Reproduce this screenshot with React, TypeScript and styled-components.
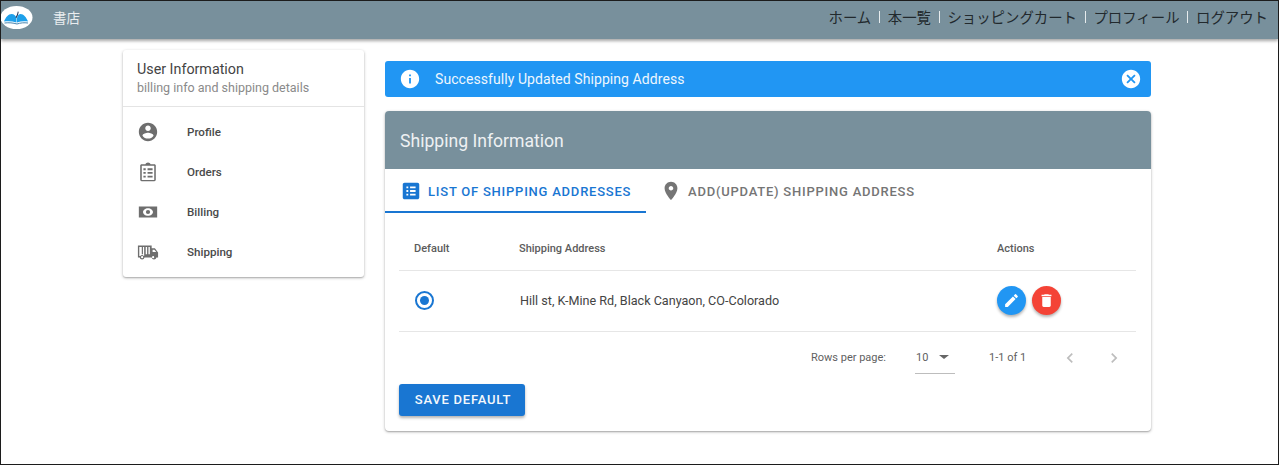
import React from 'react'
import styled, {createGlobalStyle} from 'styled-components'

const GlobalStyle = createGlobalStyle`
  html, body {
    margin: 0;
    padding: 0;
    background: #fff;
  }
  * {
    box-sizing: border-box;
  }
  body {
    font-family: Roboto, "Noto Sans CJK JP", sans-serif;
  }
`

const Frame = styled.div`
  width: 1279px;
  height: 465px;
  border: 1px solid #1c1c1c;
  overflow: hidden;
  display: flex;
  flex-direction: column;
`

const AppBar = styled.header`
  height: 38px;
  flex: none;
  background: #78909c;
  box-shadow: 0 2px 3px rgba(0, 0, 0, 0.35);
  display: flex;
  align-items: flex-start;
  justify-content: space-between;
  padding-right: 10px;
`

const Brand = styled.div`
  display: flex;
  align-items: center;
  gap: 20px;
  padding-top: 4px;
`

const BrandName = styled.span`
  font-family: "Noto Sans CJK JP", sans-serif;
  font-size: 13.5px;
  line-height: 22px;
  color: #e9edef;
`

const Nav = styled.nav`
  display: flex;
  align-items: center;
  height: 30px;
  font-family: "Noto Sans CJK JP", sans-serif;
  font-size: 14.4px;
  color: #22292d;
`

const NavSep = styled.span`
  width: 1px;
  height: 12px;
  margin: 2px 7.75px 0 7.75px;
  background: #e6ebed;
`

const Content = styled.main`
  flex: 1;
  display: flex;
  align-items: flex-start;
  gap: 21px;
  padding: 11px 0 0 122px;
`

const SideCard = styled.aside`
  width: 241px;
  flex: none;
  height: 227px;
  background: #fff;
  border-radius: 3px;
  box-shadow: 0 1px 3px rgba(0, 0, 0, 0.3), 0 1px 1px rgba(0, 0, 0, 0.1);
`

const SideHead = styled.div`
  height: 57px;
  padding: 11px 14px 0;
  border-bottom: 1px solid #e4e4e4;
`

const SideTitle = styled.div`
  font-size: 14.3px;
  line-height: 17px;
  color: #444;
`

const SideSub = styled.div`
  font-size: 12.5px;
  line-height: 20px;
  color: #8a8a8a;
`

const SideList = styled.ul`
  list-style: none;
  margin: 0;
  padding: 5px 0 0;
`

const SideItem = styled.li`
  height: 40px;
  display: flex;
  align-items: center;
  padding-left: 14px;
  font-size: 11.6px;
  font-weight: 500;
  color: #4a4a4a;
`

const SideIcon = styled.svg`
  width: 22px;
  height: 22px;
  margin-right: 28px;
  fill: #6e6e6e;
  flex: none;
`

const Column = styled.div`
  width: 766px;
  padding-top: 11px;
  display: flex;
  flex-direction: column;
  gap: 14px;
`

const Alert = styled.div`
  height: 36px;
  background: #2196f3;
  border-radius: 3px;
  display: flex;
  align-items: center;
  padding: 0 9px 0 14px;
  color: #eef7fe;
  font-size: 14px;
`

const AlertIcon = styled.svg`
  width: 22px;
  height: 22px;
  fill: #fff;
  flex: none;
`

const AlertText = styled.span`
  flex: 1;
  margin-left: 14px;
  letter-spacing: 0.07px;
`

const Card = styled.section`
  height: 320px;
  background: #fff;
  border-radius: 4px;
  overflow: hidden;
  box-shadow: 0 1px 3px rgba(0, 0, 0, 0.3), 0 1px 1px rgba(0, 0, 0, 0.12);
`

const CardHead = styled.div`
  height: 58px;
  background: #78909c;
  display: flex;
  align-items: center;
  padding: 1px 0 0 15px;
  font-size: 17.6px;
  color: #eef1f3;
`

const Tabs = styled.div`
  height: 44px;
  display: flex;
`

const Tab = styled.div<{$active?: boolean}>`
  width: ${(props) => (props.$active ? '261px' : 'auto')};
  display: flex;
  align-items: center;
  gap: 6px;
  padding-left: ${(props) => (props.$active ? '15px' : '14px')};
  padding-top: 2px;
  font-size: 13px;
  font-weight: 500;
  letter-spacing: 0.77px;
  color: ${(props) => (props.$active ? '#1976d2' : '#757575')};
  border-bottom: 2px solid ${(props) => (props.$active ? '#1976d2' : 'transparent')};
`

const TabIcon = styled.svg<{$active?: boolean}>`
  width: 22px;
  height: 22px;
  flex: none;
  fill: ${(props) => (props.$active ? '#1976d2' : '#757575')};
`

const TableWrap = styled.div`
  margin: 14px 15px 0 14px;
`

const Row = styled.div<{$head?: boolean}>`
  height: ${(props) => (props.$head ? '44px' : '61px')};
  display: grid;
  grid-template-columns: 105px 478px 1fr;
  align-items: center;
  padding-left: 15px;
  padding-bottom: ${(props) => (props.$head ? '0' : '2px')};
  border-bottom: 1px solid #e6e6e6;
  font-size: ${(props) => (props.$head ? '11px' : '12.6px')};
  font-weight: ${(props) => (props.$head ? 500 : 400)};
  color: ${(props) => (props.$head ? '#5c5c5c' : '#444')};
`

const RadioOuter = styled.span`
  width: 19px;
  height: 19px;
  margin-left: 1px;
  border-radius: 50%;
  border: 2px solid #1976d2;
  display: flex;
  align-items: center;
  justify-content: center;
`

const RadioDot = styled.span`
  width: 9px;
  height: 9px;
  border-radius: 50%;
  background: #1976d2;
`

const AddressCell = styled.span`
  padding-left: 1px;
`

const Actions = styled.div`
  display: flex;
  gap: 6px;
  padding-top: 1px;
`

const RoundButton = styled.button<{$color: string}>`
  width: 29px;
  height: 29px;
  padding: 0;
  border: none;
  border-radius: 50%;
  background: ${(props) => props.$color};
  box-shadow: 0 2px 3px rgba(0, 0, 0, 0.3);
  display: flex;
  align-items: center;
  justify-content: center;
`

const RoundIcon = styled.svg`
  width: 17px;
  height: 17px;
  fill: #fff;
`

const Pager = styled.div`
  height: 51px;
  display: flex;
  align-items: center;
  padding-left: 412px;
  font-size: 11px;
  color: #5f5f5f;
`

const PagerSelect = styled.div`
  width: 40px;
  height: 30px;
  margin: 0 34px 0 29px;
  display: flex;
  align-items: center;
  justify-content: space-between;
  padding: 0 6px 0 1px;
  border-bottom: 1px solid #bdbdbd;
  position: relative;
  top: 1px;
`

const PagerValue = styled.span`
  position: relative;
  top: -1px;
`

const Caret = styled.span`
  width: 0;
  height: 0;
  border-left: 5px solid transparent;
  border-right: 5px solid transparent;
  border-top: 4px solid #666;
  position: relative;
  top: -1px;
`

const Chevrons = styled.div`
  display: flex;
  gap: 24px;
  margin-left: 34px;
`

const ChevronIcon = styled.svg`
  width: 20px;
  height: 20px;
  fill: #bdbdbd;
`

const SaveButton = styled.button`
  display: block;
  width: 126px;
  height: 32px;
  margin: 1px 0 0 14px;
  padding: 0 0 1px 2px;
  border: none;
  border-radius: 3px;
  background: #1976d2;
  color: #f4f8fc;
  font-family: Roboto, sans-serif;
  font-size: 13px;
  font-weight: 500;
  letter-spacing: 0.77px;
  box-shadow: 0 2px 3px rgba(0, 0, 0, 0.3);
`

const Logo = () => (
  <svg width="32" height="24" viewBox="0 0 32 24">
    <ellipse cx="15.5" cy="12.5" rx="16" ry="11.5" fill="#fff" />
    <path d="M3 16.500c1.500-4 4.500-7.500 7.500-7.500 2.500 0 4.500 1.700 5 4v4.500c-4-1.300-8-1.500-12.500-1z" fill="#1ea0ea" />
    <path d="M27 16.500c-1.500-4-4.500-7.500-7.500-7.500-1.500 0-3 1-3.500 4v4.500c3.500-1.300 7-1.500 11-1z" fill="#1ea0ea" />
    <path d="M3.500 18c4.500-.5 8.500-.2 12.500 1 3.500-1.200 7-1.500 11-1" fill="none" stroke="#4a86b0" strokeWidth="1" />
    <path d="M14.500 12.500l1.500-3 .8-3 .9.200-.7 3.300-1.500 3z" fill="#23365c" />
  </svg>
)

const navLinks = ['ホーム', '本一覧', 'ショッピングカート', 'プロフィール', 'ログアウト']

const sideItems = [
  {
    label: 'Profile',
    icon: (
      <path d="M12 2C6.480 2 2 6.480 2 12s4.480 10 10 10 10-4.480 10-10S17.520 2 12 2zm0 3c1.660 0 3 1.340 3 3s-1.340 3-3 3-3-1.340-3-3 1.340-3 3-3zm0 14.200c-2.500 0-4.710-1.280-6-3.220.03-1.990 4-3.080 6-3.080 1.990 0 5.970 1.090 6 3.080-1.290 1.940-3.500 3.220-6 3.220z" />
    ),
  },
  {
    label: 'Orders',
    icon: (
      <path
        fillRule="evenodd"
        d="M5 3.500h4.200C9.600 2.300 10.700 1.500 12 1.500s2.400.8 2.800 2H19c.8 0 1.500.7 1.500 1.500v15.500c0 .8-.7 1.500-1.500 1.500H5c-.8 0-1.500-.7-1.500-1.500V5c0-.8.7-1.500 1.500-1.500zM5.200 5.200v15.600h13.600V5.200zM7 8h2.500v2H7zm4.500 0H17v2h-5.500zM7 12h2.500v2H7zm4.500 0H17v2h-5.500zM7 16h2.500v2H7zm4.500 0H17v2h-5.500z"
      />
    ),
  },
  {
    label: 'Billing',
    icon: (
      <path
        fillRule="evenodd"
        d="M2 6h20v12H2zM12 7.800c-3 0-5.400 2-5.400 4.200s2.400 4.200 5.400 4.200 5.400-2 5.400-4.200-2.400-4.200-5.400-4.200zM12 9.700a2.300 2.300 0 1 1 0 4.600 2.300 2.300 0 0 1 0-4.600z"
      />
    ),
  },
  {
    label: 'Shipping',
    icon: (
      <path
        fillRule="evenodd"
        d="M1 5h15v3h3.500l3.500 4.500V18h-1.800a2.700 2.700 0 0 1-5.300 0H8.200a2.700 2.700 0 0 1-5.300 0H1zm1.500 1.500V16.400h1.100a2.700 2.700 0 0 1 3.900 0h.3V6.500h-1.300v8H5.200v-8zm7 0v8H11v-8zm3 0v8H14v-8zM17 9.500V12h4l-2-2.500zM5.600 16.400a1.200 1.200 0 1 0 0 2.400 1.200 1.200 0 0 0 0-2.400zm12 0a1.200 1.200 0 1 0 0 2.400 1.200 1.200 0 0 0 0-2.400z"
      />
    ),
  },
]

export default function App() {
  return (
    <>
      <GlobalStyle />
      <Frame>
        <AppBar>
          <Brand>
            <Logo />
            <BrandName>書店</BrandName>
          </Brand>
          <Nav>
            {navLinks.map((link, i) => (
              <React.Fragment key={link}>
                {i > 0 && <NavSep />}
                <span>{link}</span>
              </React.Fragment>
            ))}
          </Nav>
        </AppBar>
        <Content>
          <SideCard>
            <SideHead>
              <SideTitle>User Information</SideTitle>
              <SideSub>billing info and shipping details</SideSub>
            </SideHead>
            <SideList>
              {sideItems.map((item) => (
                <SideItem key={item.label}>
                  <SideIcon viewBox="0 0 24 24">{item.icon}</SideIcon>
                  {item.label}
                </SideItem>
              ))}
            </SideList>
          </SideCard>
          <Column>
            <Alert>
              <AlertIcon viewBox="0 0 24 24">
                <path d="M12 2C6.480 2 2 6.480 2 12s4.480 10 10 10 10-4.480 10-10S17.520 2 12 2zm1 15h-2v-6h2v6zm0-8h-2V7h2v2z" />
              </AlertIcon>
              <AlertText>Successfully Updated Shipping Address</AlertText>
              <AlertIcon viewBox="0 0 24 24">
                <path d="M12 2C6.470 2 2 6.470 2 12s4.470 10 10 10 10-4.470 10-10S17.530 2 12 2zm5 13.590L15.590 17 12 13.410 8.410 17 7 15.590 10.590 12 7 8.410 8.410 7 12 10.590 15.590 7 17 8.410 13.410 12 17 15.590z" />
              </AlertIcon>
            </Alert>
            <Card>
              <CardHead>Shipping Information</CardHead>
              <Tabs>
                <Tab $active>
                  <TabIcon $active viewBox="0 0 24 24">
                    <path d="M19 3H5c-1.100 0-2 .9-2 2v14c0 1.100.9 2 2 2h14c1.100 0 2-.9 2-2V5c0-1.100-.9-2-2-2zM9 17H7v-2h2v2zm0-4H7v-2h2v2zm0-4H7V7h2v2zm8 8h-6v-2h6v2zm0-4h-6v-2h6v2zm0-4h-6V7h6v2z" />
                  </TabIcon>
                  LIST OF SHIPPING ADDRESSES
                </Tab>
                <Tab>
                  <TabIcon viewBox="0 0 24 24">
                    <path d="M12 2C8.130 2 5 5.130 5 9c0 5.250 7 13 7 13s7-7.750 7-13c0-3.870-3.130-7-7-7zm0 9.500c-1.380 0-2.500-1.120-2.500-2.500s1.120-2.500 2.500-2.500 2.500 1.120 2.500 2.500-1.120 2.500-2.500 2.500z" />
                  </TabIcon>
                  ADD(UPDATE) SHIPPING ADDRESS
                </Tab>
              </Tabs>
              <TableWrap>
                <Row $head>
                  <span>Default</span>
                  <span>Shipping Address</span>
                  <span>Actions</span>
                </Row>
                <Row>
                  <RadioOuter>
                    <RadioDot />
                  </RadioOuter>
                  <AddressCell>Hill st, K-Mine Rd, Black Canyaon, CO-Colorado</AddressCell>
                  <Actions>
                    <RoundButton $color="#2196f3">
                      <RoundIcon viewBox="0 0 24 24">
                        <path d="M3 17.250V21h3.750L17.810 9.940l-3.750-3.750L3 17.250zM20.710 7.040c.39-.39.39-1.020 0-1.410l-2.340-2.340a.9959.9959 0 0 0-1.410 0l-1.830 1.830 3.750 3.750 1.830-1.830z" />
                      </RoundIcon>
                    </RoundButton>
                    <RoundButton $color="#f44336">
                      <RoundIcon viewBox="0 0 24 24">
                        <path d="M6 19c0 1.100.9 2 2 2h8c1.100 0 2-.9 2-2V7H6v12zM19 4h-3.500l-1-1h-5l-1 1H5v2h14V4z" />
                      </RoundIcon>
                    </RoundButton>
                  </Actions>
                </Row>
                <Pager>
                  <span>Rows per page:</span>
                  <PagerSelect>
                    <PagerValue>10</PagerValue>
                    <Caret />
                  </PagerSelect>
                  <span>1-1 of 1</span>
                  <Chevrons>
                    <ChevronIcon viewBox="0 0 24 24">
                      <path d="M15.410 7.410L14 6l-6 6 6 6 1.410-1.410L10.830 12z" />
                    </ChevronIcon>
                    <ChevronIcon viewBox="0 0 24 24">
                      <path d="M10 6L8.590 7.410 13.170 12l-4.580 4.590L10 18l6-6z" />
                    </ChevronIcon>
                  </Chevrons>
                </Pager>
              </TableWrap>
              <SaveButton>SAVE DEFAULT</SaveButton>
            </Card>
          </Column>
        </Content>
      </Frame>
    </>
  )
}
